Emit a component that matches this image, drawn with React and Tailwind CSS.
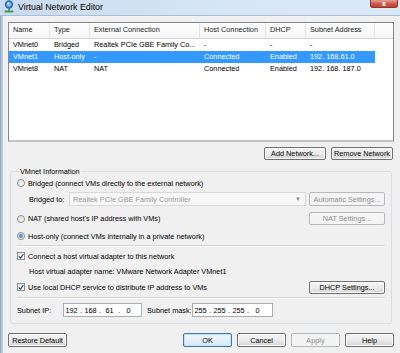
import React from "react";

const cols = [
  { w: "w-[41px]", label: "Name" },
  { w: "w-[40px]", label: "Type" },
  { w: "w-[110px]", label: "External Connection" },
  { w: "w-[66px]", label: "Host Connection" },
  { w: "w-[40px]", label: "DHCP" },
  { w: "w-[69px]", label: "Subnet Address" },
];

const rows = [
  ["VMnet0", "Bridged", "Realtek PCIe GBE Family Co...", "-", "-", "-"],
  ["VMnet1", "Host-only", "-", "Connected", "Enabled", "192. 168.61.0"],
  ["VMnet8", "NAT", "NAT", "Connected", "Enabled", "192. 168. 187.0"],
];

const Btn = ({ children, className = "", disabled, primary }) => {
  let look =
    "border-[#707070] bg-linear-to-b from-[#f4f4f4] via-[#ebebeb] to-[#d6d6d6] text-black shadow-[inset_0_0_0_1px_#fcfcfc]";
  if (disabled) look = "border-[#b5b9bc] bg-[#f4f4f4] text-[#8f8f8f]";
  if (primary)
    look =
      "border-[#3d7bad] bg-linear-to-b from-[#f0f7fd] to-[#d7e9f7] text-black shadow-[inset_0_0_0_1px_#bfe0f7]";
  return (
    <div
      className={
        "flex shrink-0 items-center justify-center rounded-[2px] border text-[7.3px] leading-none " +
        look +
        " " +
        className
      }
    >
      {children}
    </div>
  );
};

const Radio = ({ checked }) => (
  <div className="flex h-[8px] w-[8px] shrink-0 items-center justify-center rounded-full border border-[#8e8f8f] bg-linear-to-br from-[#dcdcdc] to-[#fafafa]">
    {checked && (
      <div className="h-[4px] w-[4px] rounded-full bg-radial from-[#7cc0f5] to-[#1c5aa8]" />
    )}
  </div>
);

const Check = () => (
  <div className="flex h-[8px] w-[8px] shrink-0 items-center justify-center border border-[#8e8f8f] bg-linear-to-br from-[#e6e6e6] to-[#ffffff]">
    <svg width="7" height="7" viewBox="0 0 7 7">
      <path d="M1 3.5 L3 5.5 L6.2 0.8" fill="none" stroke="#21468c" strokeWidth="1.3" />
    </svg>
  </div>
);

const IpBox = ({ parts, className = "" }) => (
  <div
    className={
      "flex h-[14px] items-center border border-[#abadb3] bg-white text-[7.3px] leading-none " +
      className
    }
  >
    {parts.map((p, i) => (
      <React.Fragment key={i}>
        {i > 0 && <span className="w-[4px] text-center">.</span>}
        <span className="w-[15px] text-center">{p}</span>
      </React.Fragment>
    ))}
  </div>
);

export default function App() {
  return (
    <div className="flex h-[353px] w-[400px] flex-col overflow-hidden bg-[#f0f0f0] font-['Liberation_Sans',Arial,sans-serif] text-black">
      {/* title bar */}
      <div className="flex h-[16px] shrink-0 items-start bg-linear-to-r from-[#c9dbef] via-[#d6e5f5] to-[#dbe8f6] border-b border-[#a9bdd4]">
        <svg width="12" height="13" viewBox="0 0 12 13" className="ml-[3px]">
          <circle cx="6" cy="4.5" r="4.2" fill="#2f6fc0" />
          <circle cx="6" cy="4.5" r="2.4" fill="#7fb6ee" />
          <circle cx="5.2" cy="3.6" r="1" fill="#e8f3ff" />
          <rect x="5.3" y="8.5" width="1.4" height="2.2" fill="#3a5a7a" />
          <rect x="1.5" y="10.6" width="9" height="1.8" rx="0.6" fill="#3aa24a" />
        </svg>
        <span className="ml-[3px] mt-[1px] text-[8.8px] leading-[12px]">Virtual Network Editor</span>
        <div className="ml-auto mr-[2px] flex h-[8px] w-[28px] items-center justify-center rounded-b-[3px] border border-t-0 border-[#8a3a32] bg-linear-to-b from-[#e0a197] via-[#cf5b4c] to-[#c23f2e]">
          <span className="text-[8px] font-bold leading-none text-white">x</span>
        </div>
      </div>

      <div className="flex flex-1">
        {/* left frame */}
        <div className="w-[3px] shrink-0 bg-linear-to-r from-[#8ea6c2] to-[#cbd9e8]" />

        {/* client */}
        <div className="flex flex-1 flex-col pl-[5px] pr-[6px] pt-[6px]">
          {/* list */}
          <div className="flex h-[120px] flex-col border border-[#828790] border-b-[2px] border-b-[#c2c4c8] bg-white">
            <div className="flex h-[16px] border-b border-[#d5d5d5] bg-linear-to-b from-white to-[#f5f5f5] text-[7.3px] text-[#222]">
              {cols.map((c) => (
                <div key={c.label} className={c.w + " flex items-center border-r border-[#e2e2e2] pl-[4px]"}>
                  {c.label}
                </div>
              ))}
              <div className="flex-1" />
            </div>
            {rows.map((r, i) => (
              <div key={i} className="flex h-[12px] text-[7.3px]">
                <div className={"flex " + (i === 1 ? "bg-[#3399ff] text-white" : "")}>
                  {r.map((cell, j) => (
                    <div key={j} className={cols[j].w + " flex items-center pl-[4px] whitespace-nowrap"}>
                      {cell}
                    </div>
                  ))}
                </div>
              </div>
            ))}
          </div>

          <div className="mt-[5px] flex justify-end gap-[5px] pr-[1px]">
            <Btn className="h-[13px] w-[62px]">Add Network...</Btn>
            <Btn className="h-[13px] w-[62px] shadow-[inset_0_0_0_1px_#d4e8f8]">Remove Network</Btn>
          </div>

          {/* group */}
          <fieldset className="mx-[2px] mt-[8px] flex flex-col rounded-[3px] border border-[#d5dfe5] px-[6px] pb-[6px] text-[7.3px] leading-none">
            <legend className="ml-[2px] px-[1px] text-[7.3px]">VMnet Information</legend>

            <div className="mt-[2px] flex h-[12px] items-center gap-[3px]">
              <Radio />
              <span>Bridged (connect VMs directly to the external network)</span>
            </div>

            <div className="mt-[3px] flex h-[14px] items-center">
              <span className="ml-[12px] w-[40px]">Bridged to:</span>
              <div className="flex h-[14px] w-[237px] items-center border border-[#d9d9d9] bg-[#f7f7f7] pl-[3px] pr-[4px] text-[#9a9a9a]">
                <span>Realtek PCIe GBE Family Controller</span>
                <span className="ml-auto text-[6px] text-[#888]">▼</span>
              </div>
              <Btn disabled className="ml-auto h-[14px] w-[76px]">Automatic Settings...</Btn>
            </div>

            <div className="mt-[6px] flex h-[13px] items-center gap-[3px]">
              <Radio />
              <span>NAT (shared host's IP address with VMs)</span>
              <Btn disabled className="ml-auto h-[13px] w-[76px]">NAT Settings...</Btn>
            </div>

            <div className="mt-[5px] flex h-[12px] items-center gap-[3px]">
              <Radio checked />
              <span>Host-only (connect VMs internally in a private network)</span>
            </div>

            <div className="mt-[3px] h-[2px] border-t border-b border-t-[#d5d5d5] border-b-white" />

            <div className="mt-[3px] flex h-[12px] items-center gap-[3px]">
              <Check />
              <span>Connect a host virtual adapter to this network</span>
            </div>

            <div className="mt-[3px] flex h-[12px] items-center pl-[12px]">
              Host virtual adapter name: VMware Network Adapter VMnet1
            </div>

            <div className="mt-[4px] flex h-[12px] items-center gap-[3px]">
              <Check />
              <span>Use local DHCP service to distribute IP address to VMs</span>
              <Btn className="ml-auto h-[13px] w-[76px]">DHCP Settings...</Btn>
            </div>

            <div className="mt-[4px] h-[2px] border-t border-b border-t-[#d5d5d5] border-b-white" />

            <div className="mt-[4px] flex h-[14px] items-center">
              <span className="w-[46px]">Subnet IP:</span>
              <IpBox parts={["192", "168", "61", "0"]} className="w-[79px]" />
              <span className="ml-[5px] w-[45px]">Subnet mask:</span>
              <IpBox parts={["255", "255", "255", "0"]} className="w-[81px]" />
            </div>
          </fieldset>

          <div className="mt-[9px] flex items-center gap-[5px]">
            <Btn className="h-[14px] w-[59px]">Restore Default</Btn>
            <Btn primary className="ml-auto h-[14px] w-[49px]">OK</Btn>
            <Btn className="h-[14px] w-[49px]">Cancel</Btn>
            <Btn disabled className="h-[14px] w-[49px]">Apply</Btn>
            <Btn className="h-[14px] w-[49px]">Help</Btn>
          </div>
        </div>
      </div>
    </div>
  );
}
